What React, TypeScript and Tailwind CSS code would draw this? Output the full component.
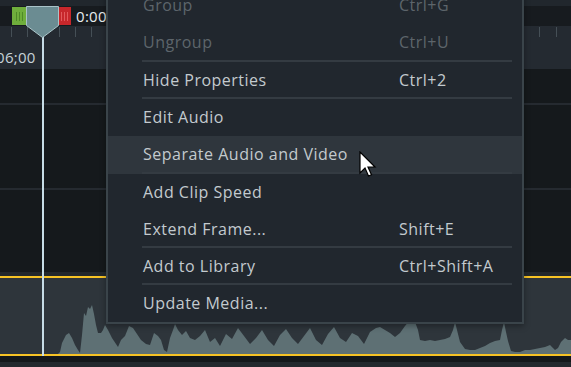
import React from "react";

type Item = { label: string; shortcut?: string; disabled?: boolean; sep?: boolean; hl?: boolean; h: number };

const items: Item[] = [
  { label: "Group", shortcut: "Ctrl+G", disabled: true, h: 37 },
  { label: "Ungroup", shortcut: "Ctrl+U", disabled: true, sep: true, h: 38 },
  { label: "Hide Properties", shortcut: "Ctrl+2", sep: true, h: 37 },
  { label: "Edit Audio", h: 37 },
  { label: "Separate Audio and Video", hl: true, sep: true, h: 38 },
  { label: "Add Clip Speed", h: 37 },
  { label: "Extend Frame...", shortcut: "Shift+E", sep: true, h: 37 },
  { label: "Add to Library", shortcut: "Ctrl+Shift+A", sep: true, h: 37 },
  { label: "Update Media...", h: 37 },
];

// waveform top y (absolute screen y) by x
const wavePts: [number, number][] = [
  [0, 354], [58, 354], [60, 352], [62, 343], [66, 335], [69, 333], [72, 338], [75, 345], [78, 350], [80, 353],
  [82, 335], [84, 313], [86, 316], [88, 307], [90, 309], [92, 305], [94, 314], [96, 325], [98, 333], [101, 333],
  [103, 330], [105, 325], [108, 330], [112, 338], [116, 344], [118, 347], [121, 340], [125, 336], [129, 326],
  [133, 328], [137, 334], [141, 340], [146, 344], [150, 345], [154, 333], [158, 336], [161, 340], [164, 350],
  [167, 352], [170, 338], [173, 330], [175, 324], [178, 330], [182, 335], [186, 331], [190, 338], [195, 340],
  [200, 336], [205, 330], [210, 342], [215, 338], [220, 346], [226, 334], [232, 339], [238, 328], [244, 336],
  [250, 344], [256, 338], [262, 330], [268, 340], [274, 346], [280, 335], [286, 329], [292, 338], [298, 344],
  [304, 336], [310, 328], [316, 340], [322, 345], [328, 334], [334, 327], [340, 338], [346, 342], [352, 333],
  [358, 336], [364, 344], [370, 332], [376, 328], [380, 327], [385, 330], [390, 333], [395, 337], [400, 333],
  [405, 326], [410, 320], [415, 322], [418, 330], [420, 340], [425, 341], [430, 340], [435, 341], [440, 340],
  [445, 339], [450, 337], [453, 330], [455, 322], [457, 330], [460, 342], [465, 349], [470, 350], [475, 350],
  [480, 348], [485, 346], [490, 343], [495, 341], [500, 340], [502, 330], [504, 322], [506, 332], [508, 341],
  [511, 351], [515, 352], [520, 352], [525, 350], [530, 350], [535, 349], [540, 348], [545, 347], [550, 345],
  [555, 350], [558, 348], [561, 342], [565, 338], [568, 340], [571, 340],
];

function Waveform() {
  const top = 278;
  const d =
    "M0 76 " +
    wavePts.map(([x, y]) => `L${x} ${y - top}`).join(" ") +
    " L571 76 Z";
  return (
    <svg width="571" height="76" viewBox="0 0 571 76" className="block">
      <path d={d} fill="#5e7074" />
    </svg>
  );
}

function RulerTicks() {
  const xs: number[] = [];
  for (let x = 10.5; x < 571; x += 16.03) xs.push(Math.round(x) + 0.5);
  return (
    <svg width="571" height="43" className="block">
      {xs.map((x) => (
        <line key={x} x1={x} x2={x} y1={1} y2={11} stroke="#454f56" strokeWidth={1} />
      ))}
    </svg>
  );
}

export default function App() {
  return (
    <div
      className="relative w-[571px] h-[367px] overflow-hidden bg-[#171b1f]"
      style={{ fontFamily: "'Open Sans', Lato, sans-serif" }}
    >
      {/* timeline stack */}
      <div className="flex flex-col">
        <div className="h-[6px] bg-[#21272d]" />
        <div className="h-[20px] bg-[#171b1f] flex items-center">
          <div className="ml-[76px] text-[15px] leading-none text-[#e6ecef] tracking-[0.3px]">0:00</div>
        </div>
        <div className="relative h-[43px] bg-[#242a31]">
          <RulerTicks />
          <div className="absolute left-[-4px] top-[24px] text-[15px] leading-none text-[#c6d2d8] tracking-[0.3px]">06;00</div>
        </div>
        <div className="h-[34px] bg-[#15191c]" />
        <div className="h-[2px] bg-[#252a30]" />
        <div className="h-[83px] bg-[#15191c]" />
        <div className="h-[2px] bg-[#252a30]" />
        <div className="h-[82px] bg-[#15191c]" />
        <div className="h-[4px] bg-[#22272c]" />
        <div className="h-[2px] bg-[#f7c325]" />
        <div className="h-[76px] bg-[#2e353b]">
          <Waveform />
        </div>
        <div className="h-[2px] bg-[#f7c325]" />
        <div className="h-[6px] bg-[#14181b]" />
        <div className="h-[10px] bg-[#23292e]" />
      </div>

      {/* playhead line */}
      <div className="absolute left-[42px] top-[36px] w-[2px] h-[320px] bg-[#c6dce6]" />

      {/* in/out markers */}
      <div className="absolute left-[12px] top-[7px] w-[15px] h-[18px] bg-[#6fae3c] flex items-center justify-center gap-[2px]">
        <div className="w-[1px] h-[9px] bg-[#4e8a27]" />
        <div className="w-[1px] h-[9px] bg-[#4e8a27]" />
        <div className="w-[1px] h-[9px] bg-[#4e8a27]" />
      </div>
      <div className="absolute left-[58px] top-[7px] w-[13px] h-[18px] bg-[#c7272b] flex items-center justify-center gap-[2px]">
        <div className="w-[1px] h-[9px] bg-[#e25a5c]" />
        <div className="w-[1px] h-[9px] bg-[#e25a5c]" />
        <div className="w-[1px] h-[9px] bg-[#e25a5c]" />
      </div>
      {/* playhead handle */}
      <svg className="absolute left-[26px] top-[6px]" width="34" height="33" viewBox="0 0 34 33">
        <polygon points="0.5,0.5 32.5,0.5 32.5,19.5 16.5,31.5 0.5,19.5" fill="#6b8c92" stroke="#a9c3c8" strokeWidth="1" />
      </svg>

      {/* context menu */}
      <div className="absolute left-[106px] top-[-15px] w-[418px] border-2 border-[#3a444a] bg-[#21272e] shadow-[0_2px_6px_rgba(0,0,0,0.35)]">
        {items.map((it) => (
          <div
            key={it.label}
            className={`flex pl-[34px] pr-[10px] ${it.hl ? "bg-[#2f363d]" : ""}`}
            style={{ height: it.h }}
          >
            <div
              className={`flex flex-1 items-center text-[16px] tracking-[0.5px] ${
                it.sep ? "border-b-2 border-[#343b42]" : "border-b-2 border-transparent"
              } ${it.disabled ? "text-[#5d656b]" : "text-[#c3cace]"}`}
            >
              <span className="w-[257px] pl-[1px] whitespace-nowrap">{it.label}</span>
              {it.shortcut && <span className="whitespace-nowrap">{it.shortcut}</span>}
            </div>
          </div>
        ))}
      </div>

      {/* mouse cursor */}
      <svg className="absolute left-[359px] top-[151px]" width="20" height="28" viewBox="0 0 20 28">
        <path
          d="M1 1 L1 22 L6 17 L9.5 25 L12.5 23.7 L9 16 L16 16 Z"
          fill="#ffffff"
          stroke="#000000"
          strokeWidth="1.2"
          strokeLinejoin="miter"
        />
      </svg>
    </div>
  );
}
